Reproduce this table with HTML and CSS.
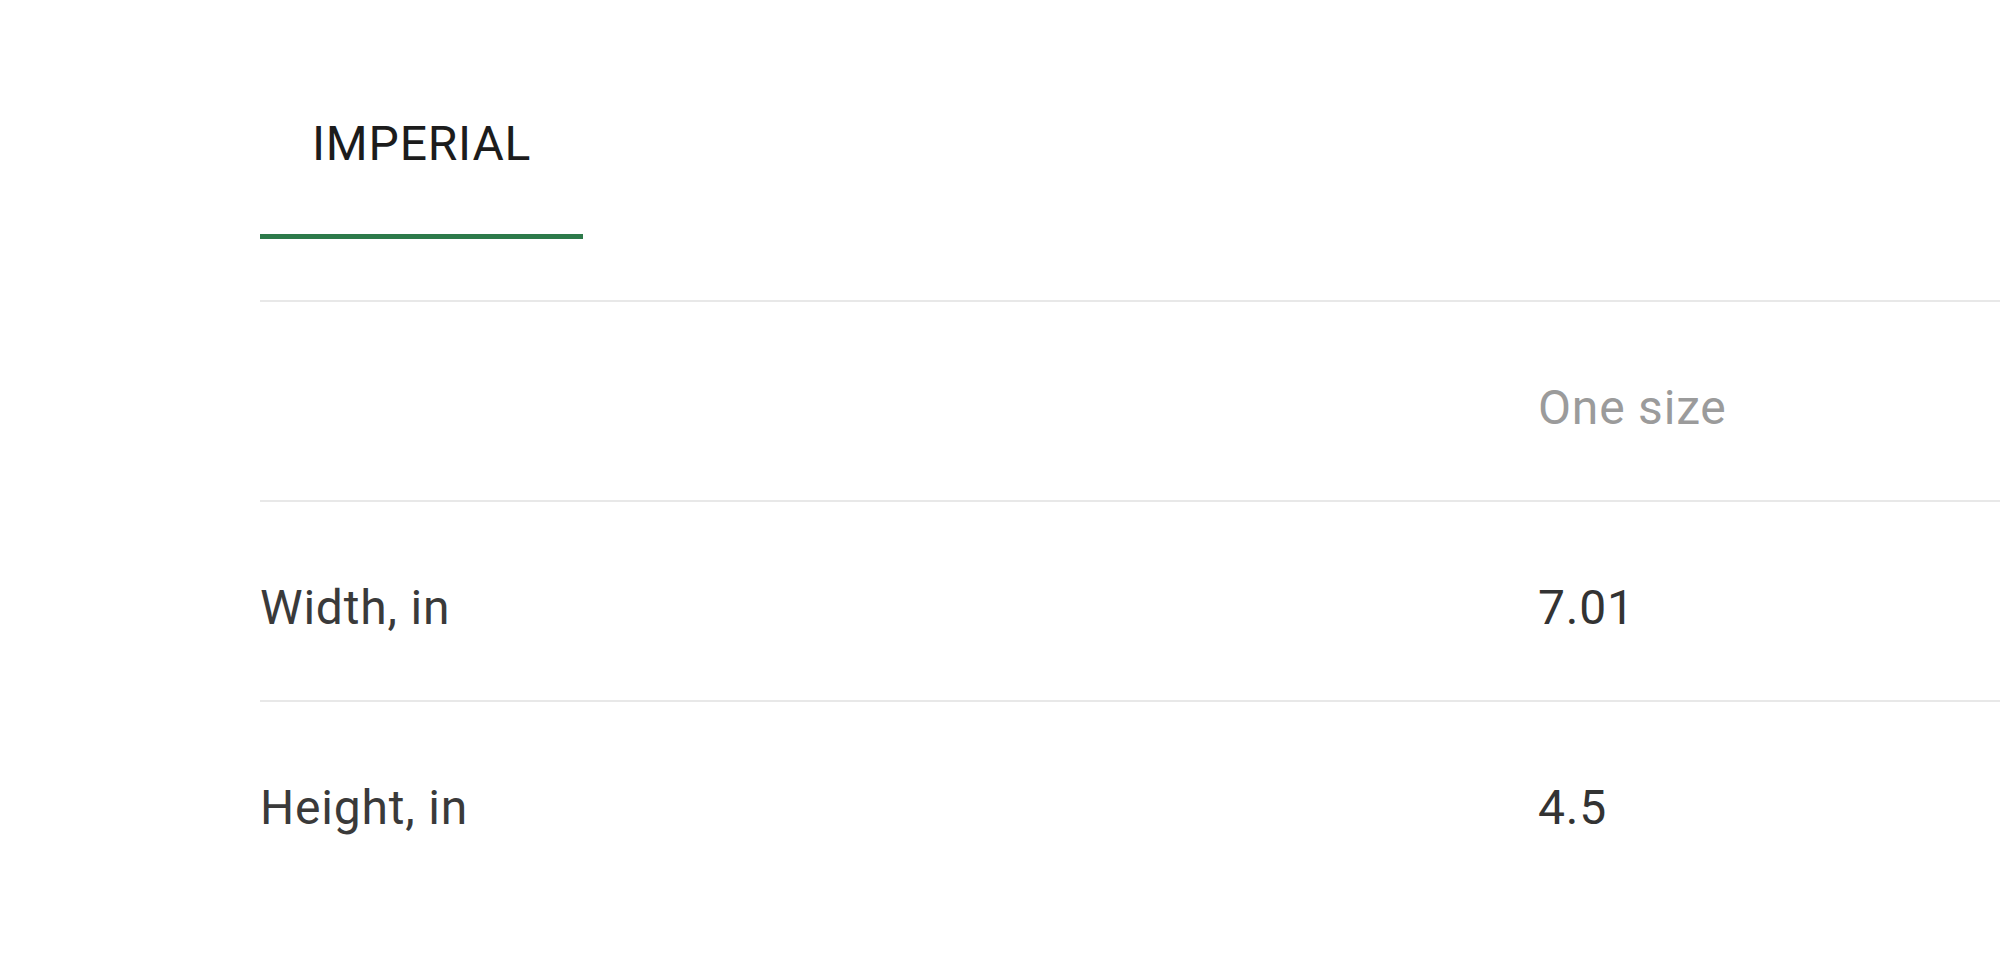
FILE: index.html
```html
<!DOCTYPE html>
<html lang="en">
<head>
<meta charset="utf-8">
<title>Size chart</title>
<link rel="stylesheet" href="styles.css">
</head>
<body>
<div class="wrap">
  <div class="tabs">
    <div class="tab tab-active">IMPERIAL</div>
  </div>
  <div class="table">
    <div class="row">
      <div class="cell label"></div>
      <div class="cell head">One size</div>
    </div>
    <div class="row">
      <div class="cell label">Width, in</div>
      <div class="cell value">7.01</div>
    </div>
    <div class="row row-last">
      <div class="cell label">Height, in</div>
      <div class="cell value">4.5</div>
    </div>
  </div>
</div>
</body>
</html>
```

FILE: styles.css
```css
html, body {
  margin: 0;
  padding: 0;
  background: #ffffff;
}

body {
  font-family: Roboto, "Liberation Sans", Arial, sans-serif;
  font-size: 48px;
  line-height: 56px;
  color: #333333;
}

.wrap {
  padding-left: 260px;
  padding-top: 116px;
}

.tabs {
  display: flex;
  margin-bottom: 61px;
}

.tab {
  padding: 0 52px 62px;
  color: #1c1c1c;
  letter-spacing: 0.8px;
}

.tab-active {
  border-bottom: 5px solid #2d7a4a;
}

.table {
  border-top: 2px solid #e8e8e8;
}

.row {
  display: grid;
  grid-template-columns: 1278px 1fr;
  padding: 78px 0 64px;
  border-bottom: 2px solid #e8e8e8;
}

.row-last {
  border-bottom: none;
}

.cell {
  letter-spacing: 0.8px;
}

.label {
  color: #3a3a3a;
  min-height: 56px;
}

.head {
  color: #9b9b9b;
}

.value {
  color: #333333;
}
```
